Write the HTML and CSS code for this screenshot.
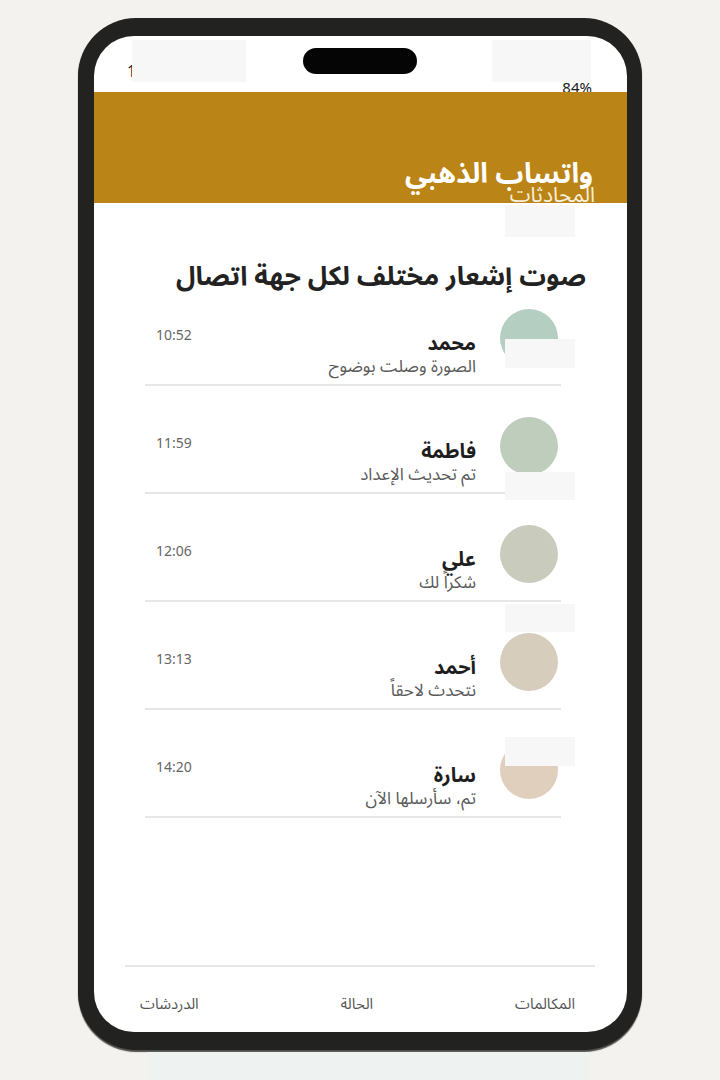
FILE: index.html
```html
<!DOCTYPE html>
<html lang="ar">
<head>
<meta charset="utf-8">
<title>واتساب الذهبي</title>
<link rel="stylesheet" href="styles.css">
</head>
<body>
<div class="stage">
  <div class="phone">
    <div class="screen" dir="rtl">
      <div class="notch"></div>
      <div class="status">
        <span class="battery">84%</span>
        <span class="clock">10:41</span>
      </div>
      <header class="appbar">
        <h1 class="app-title">واتساب الذهبي</h1>
        <div class="app-sub">المحادثات</div>
      </header>
      <h2 class="feature">صوت إشعار مختلف لكل جهة اتصال</h2>
      <ul class="chats">
        <li class="chat">
          <span class="avatar av1"></span>
          <div class="chat-text"><div class="name">محمد</div><div class="preview">الصورة وصلت بوضوح</div></div>
          <span class="time">10:52</span>
        </li>
        <li class="chat">
          <span class="avatar av2"></span>
          <div class="chat-text"><div class="name">فاطمة</div><div class="preview">تم تحديث الإعداد</div></div>
          <span class="time">11:59</span>
        </li>
        <li class="chat">
          <span class="avatar av3"></span>
          <div class="chat-text"><div class="name">علي</div><div class="preview">شكراً لك</div></div>
          <span class="time">12:06</span>
        </li>
        <li class="chat">
          <span class="avatar av4"></span>
          <div class="chat-text"><div class="name">أحمد</div><div class="preview">نتحدث لاحقاً</div></div>
          <span class="time">13:13</span>
        </li>
        <li class="chat">
          <span class="avatar av5"></span>
          <div class="chat-text"><div class="name">سارة</div><div class="preview">تم، سأرسلها الآن</div></div>
          <span class="time">14:20</span>
        </li>
      </ul>
      <nav class="tabs">
        <span class="tab">المكالمات</span>
        <span class="tab">الحالة</span>
        <span class="tab">الدردشات</span>
      </nav>
      <span class="veil veil-a"></span>
      <span class="veil veil-b"></span>
      <span class="veil veil-c"></span>
      <span class="veil veil-d"></span>
      <span class="veil veil-e"></span>
      <span class="veil veil-f"></span>
      <span class="veil veil-g"></span>
    </div>
  </div>
  <div class="under"></div>
</div>
</body>
</html>
```

FILE: styles.css
```css
* { box-sizing: border-box; }
html, body { margin: 0; padding: 0; }
body {
  background: #f3f2ee;
  font-family: "Noto Sans", "Noto Sans Arabic", "DejaVu Sans", sans-serif;
  width: 720px;
  height: 1080px;
  overflow: hidden;
}
.stage {
  padding-top: 18px;
  display: flex;
  flex-direction: column;
  align-items: center;
}
.phone {
  width: 564px;
  height: 1032px;
  background: #222220;
  border-radius: 58px;
  padding: 18px 15px 18px 16px;
  box-shadow: 0 2px 1px rgba(60, 60, 58, 0.9);
}
.screen {
  position: relative;
  height: 100%;
  background: #fff;
  border-radius: 40px;
  overflow: hidden;
  display: flex;
  flex-direction: column;
}
.notch {
  position: absolute;
  left: 209px;
  top: 12px;
  width: 114px;
  height: 26px;
  border-radius: 13px;
  background: #050505;
}
.status {
  height: 56px;
  flex: none;
  overflow: hidden;
  display: flex;
  justify-content: space-between;
  padding: 0 35px 0 33px;
  font-size: 16px;
  color: #222;
}
.clock { padding-top: 24px; }
.battery { padding-top: 41px; font-size: 15px; }
.appbar {
  flex: none;
  height: 111px;
  background: #bb8416;
  padding: 65px 34px 0 34px;
  overflow: hidden;
}
.app-title {
  margin: 0;
  font-size: 28px;
  font-weight: 700;
  line-height: 30px;
  color: #fff;
}
.app-sub {
  margin-top: -5px;
  margin-right: -2px;
  font-size: 21px;
  line-height: 24px;
  color: #f7efdd;
  font-weight: 400;
}
.feature {
  margin: 54px 41px 14px 0;
  font-size: 26.5px;
  font-weight: 700;
  line-height: 36px;
  color: #222;
}
.chats {
  list-style: none;
  margin: 0 66px 0 51px;
  padding: 0;
  flex: 1;
}
.chat {
  display: flex;
  align-items: flex-start;
  padding: 2px 3px 7px 11px;
  border-bottom: 2px solid #e6e6e6;
}
.chat + .chat { padding-top: 31px; }
.avatar {
  flex: none;
  width: 58px;
  height: 58px;
  border-radius: 50%;
}
.av1 { background: #b4cec1; }
.av2 { background: #bfcdbd; }
.av3 { background: #c9cbbd; }
.av4 { background: #d6cdbd; }
.av5 { background: #e1cfbe; }
.chat-text {
  flex: 1;
  margin-right: 24px;
  padding-top: 22px;
}
.name {
  font-size: 20px;
  font-weight: 700;
  line-height: 24px;
  color: #1e1e1e;
}
.preview {
  font-size: 17px;
  line-height: 22px;
  color: #5a5a5a;
}
.time {
  flex: none;
  padding-top: 17px;
  font-size: 14px;
  line-height: 18px;
  color: #666;
}
.tabs {
  flex: none;
  margin: 0 32px 0 31px;
  border-top: 2px solid #e6e6e6;
  height: 67px;
  display: flex;
  justify-content: space-between;
  align-items: flex-start;
  padding: 24px 20px 0 15px;
  font-size: 15px;
  line-height: 24px;
  color: #555;
}
.veil {
  position: absolute;
  background: #f7f7f7;
}
.veil-a { left: 38px; top: 4px; width: 114px; height: 42px; }
.veil-b { left: 398px; top: 4px; width: 99px; height: 42px; }
.veil-c { left: 411px; top: 169px; width: 70px; height: 32px; }
.veil-d { left: 411px; top: 303px; width: 70px; height: 29px; }
.veil-e { left: 411px; top: 436px; width: 70px; height: 28px; }
.veil-f { left: 411px; top: 568px; width: 70px; height: 28px; }
.veil-g { left: 411px; top: 701px; width: 70px; height: 29px; }
.under {
  width: 443px;
  height: 28px;
  margin-top: 2px;
  margin-left: 17px;
  background: #eef3f2;
}
```
